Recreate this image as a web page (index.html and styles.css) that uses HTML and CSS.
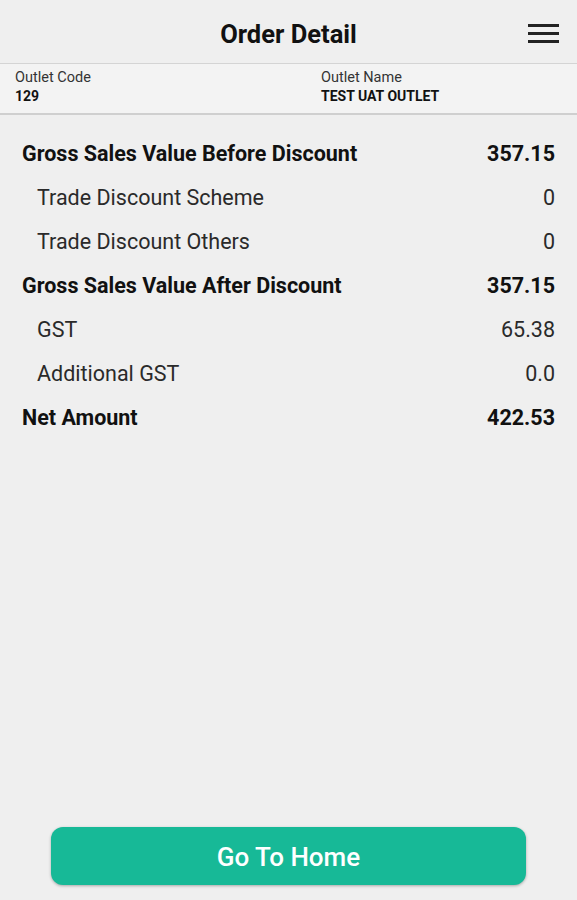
FILE: index.html
```html
<!DOCTYPE html>
<html lang="en">
<head>
    <meta charset="UTF-8">
    <meta name="viewport" content="width=device-width, initial-scale=1.0">
    <title>Order Detail</title>
    <link rel="stylesheet" href="styles.css">
</head>
<body>
    <div class="page">
        <!-- Top bar -->
        <div class="topbar">
            <h1 class="title">Order Detail</h1>
            <div class="menu">
                <span></span>
                <span></span>
                <span></span>
            </div>
        </div>

        <!-- Outlet info -->
        <div class="outlet">
            <div class="outlet-col code">
                <div class="outlet-label">Outlet Code</div>
                <div class="outlet-value">129</div>
            </div>
            <div class="outlet-col">
                <div class="outlet-label">Outlet Name</div>
                <div class="outlet-value">TEST UAT OUTLET</div>
            </div>
        </div>

        <!-- Amount summary -->
        <div class="summary">
            <div class="row bold">
                <span>Gross Sales Value Before Discount</span>
                <span>357.15</span>
            </div>
            <div class="row sub">
                <span>Trade Discount Scheme</span>
                <span>0</span>
            </div>
            <div class="row sub">
                <span>Trade Discount Others</span>
                <span>0</span>
            </div>
            <div class="row bold">
                <span>Gross Sales Value After Discount</span>
                <span>357.15</span>
            </div>
            <div class="row sub">
                <span>GST</span>
                <span>65.38</span>
            </div>
            <div class="row sub">
                <span>Additional GST</span>
                <span>0.0</span>
            </div>
            <div class="row bold">
                <span>Net Amount</span>
                <span>422.53</span>
            </div>
        </div>

        <div class="footer">
            <button class="home-btn" type="button">Go To Home</button>
        </div>
    </div>
</body>
</html>
```

FILE: styles.css
```css
html, body {
    height: 100%;
    margin: 0;
    background-color: #efefef;
    font-family: Roboto, "Liberation Sans", Arial, sans-serif;
    color: #111;
}

.page {
    display: flex;
    flex-direction: column;
    height: 100%;
}

/* Top bar */
.topbar {
    position: relative;
    height: 64px;
    display: flex;
    align-items: center;
    justify-content: center;
    border-bottom: 1px solid #d4d4d4;
    box-sizing: border-box;
    padding-top: 4px;
}

.title {
    margin: 0;
    font-size: 25.5px;
    font-weight: 700;
    color: #111;
}

.menu {
    position: absolute;
    top: 24px;
    right: 18px;
    display: flex;
    flex-direction: column;
    gap: 5px;
}

.menu span {
    display: block;
    width: 31px;
    height: 3px;
    background-color: #222;
}

/* Outlet band */
.outlet {
    display: flex;
    height: 51px;
    padding: 5px 15px 0;
    box-sizing: border-box;
    background-color: #f3f3f3;
    border-bottom: 2px solid #cfcfcf;
}

.outlet-col {
    flex: 1;
}

.outlet-col.code {
    flex: none;
    width: 306px;
}

.outlet-label {
    font-size: 14.5px;
    color: #333;
    line-height: 18px;
}

.outlet-value {
    font-size: 14px;
    font-weight: 700;
    color: #111;
    line-height: 18px;
}

/* Summary rows */
.summary {
    padding: 16px 22px 0 22px;
}

.row {
    display: flex;
    justify-content: space-between;
    align-items: center;
    height: 44px;
    font-size: 21.5px;
}

.row.bold {
    font-weight: 700;
    color: #111;
}

.row.sub {
    padding-left: 15px;
    color: #2a2a2a;
}

/* Footer button */
.footer {
    margin-top: auto;
    display: flex;
    justify-content: center;
    padding-bottom: 15px;
}

.home-btn {
    width: 475px;
    height: 58px;
    padding-top: 2px;
    border: none;
    border-radius: 12px;
    background-color: #17b997;
    color: white;
    font-family: Roboto, "Liberation Sans", Arial, sans-serif;
    font-size: 26px;
    font-weight: 500;
    box-shadow: 0 1px 3px rgba(0, 0, 0, 0.3);
    cursor: pointer;
}
```
